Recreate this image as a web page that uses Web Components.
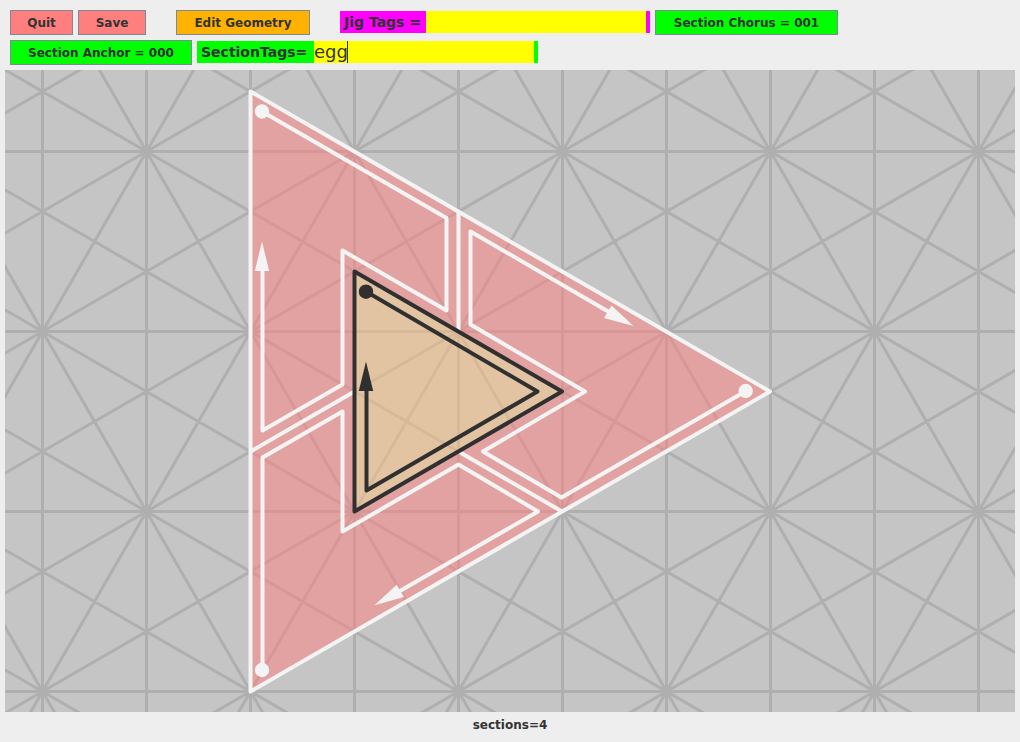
<!DOCTYPE html>
<html lang="en">
<head>
<meta charset="utf-8">
<title>Section editor</title>
<style>
  html, body { height: 100%; }
  body { margin: 0; background: #eeeeee; color: #333333; font: bold 12px/15px "DejaVu Sans", sans-serif; }
</style>
</head>
<body>
<jig-editor></jig-editor>

<template id="tool-button">
  <style>
    :host { display: block; }
    button { display: block; box-sizing: border-box; height: 25px; min-width: var(--button-width, 0); margin: 0; padding: 1px 15px 0;
      border: 1px solid #7a8a99; border-radius: 0; background: var(--fill, #00ff00);
      color: inherit; font: inherit; white-space: nowrap; text-align: center; }
  </style>
  <button type="button"><slot></slot></button>
</template>

<template id="tag-field">
  <style>
    :host { display: block; }
    .panel { display: flex; align-items: center; height: 22px; padding: 0 4px; background: var(--fill, #00ff00); }
    label { box-sizing: border-box; min-width: var(--label-width, 0); font-size: 14px; line-height: 22px; white-space: nowrap; }
    .box { position: relative; width: 220px; height: 22px; }
    input { display: block; box-sizing: border-box; width: 100%; height: 22px; margin: 0; padding: 0; border: 0; border-radius: 0;
      outline: 0; background: #ffff00; color: inherit; font: 18px/22px "DejaVu Sans", sans-serif; }
    .caret { display: none; position: absolute; left: 33px; top: 0; width: 1px; height: 22px; background: #333333; }
    :host([editing]) .caret { display: block; }
  </style>
  <div class="panel">
    <label for="tags"><slot></slot></label>
    <div class="box"><input id="tags" type="text" spellcheck="false" autocomplete="off"><span class="caret"></span></div>
  </div>
</template>

<template id="tiling-canvas">
  <style>
    :host { display: block; min-height: 0; background: #c5c5c5; overflow: hidden; }
    svg { display: block; width: 100%; height: 100%; }
    .grid { fill: none; stroke: #afafaf; stroke-width: 3; }
    .line { fill: none; stroke-width: 4; stroke-linejoin: round; stroke-linecap: butt; }
    .light { stroke: #f4f4f4; }
    .dark { stroke: #303030; }
    .light-fill { fill: #f4f4f4; }
    .dark-fill { fill: #303030; }
  </style>
  <svg viewBox="5 70 1010 642" preserveAspectRatio="xMidYMid slice" role="img" aria-label="Triangle tiling with four sections">
    <path class="grid"/>
    <path fill="#ff7f7f" fill-opacity=".5" d="M250.5 91.5L770 391.5L250.5 691.5ZM354.5 271.5V511.5L562 391.5Z"/>
    <path fill="#ffc47f" fill-opacity=".5" d="M354.5 271.5L562 391.5L354.5 511.5Z"/>
    <g class="line light">
      <path d="M250.5 91.5L770 391.5L250.5 691.5Z"/>
      <path d="M458.5 211.5V331.5M354.5 391.5L250.5 451.5M458.5 451.5L562 511.5"/>
      <path d="M262 111.5L446.5 218V310.5L342.5 250.5V384.5L262.5 430.5V270"/>
      <path d="M746 391L561.5 497.5L483 451.5L585 391.5L470.5 324.5V231.5L609 312"/>
      <path d="M262.5 670V457.5L342.5 411.5V531.5L458.5 464.5L538 511.5L399 591.5"/>
    </g>
    <g class="light-fill">
      <circle cx="262" cy="111.5" r="7.2"/><circle cx="745.7" cy="391" r="7.2"/><circle cx="262" cy="670" r="7.2"/>
      <path d="M262 241.5L269.2 271H254.8Z"/>
      <path d="M633.5 326L611.5 305.5L604 318Z"/>
      <path d="M374.5 605.3L396.7 584.8L404 597Z"/>
    </g>
    <g class="line dark">
      <path d="M354.5 271.5L562 391.5L354.5 511.5Z"/>
      <path d="M366 291.5L537.5 391.5L366.5 490.5V390"/>
    </g>
    <g class="dark-fill">
      <circle cx="366" cy="291.7" r="7.2"/>
      <path d="M366 361.5L373.2 391H358.8Z"/>
    </g>
  </svg>
</template>

<template id="jig-editor">
  <style>
    :host { display: flex; flex-direction: column; height: 100%; min-height: 300px; }
    .tools { display: flex; flex-wrap: wrap; gap: 5px; padding: 10px 10px 5px; align-items: center; }
    .danger { --fill: #ff7f7f; --button-width: 63px; }
    .save { --button-width: 68px; }
    .edit { --fill: #ffb200; --button-width: 134px; margin: 0 25px; }
    .jig { --fill: #ff00ff; --label-width: 82px; }
    .chorus { --button-width: 183px; }
    .anchor { --button-width: 182px; }
    .section { --label-width: 113px; }
    .tools tag-field { padding-bottom: 1px; }
    tiling-canvas { flex: 1; margin: 0 5px; }
    footer { padding: 6px 0 9px; text-align: center; line-height: 15px; }
  </style>
  <header class="tools">
    <tool-button class="danger">Quit</tool-button>
    <tool-button class="danger save">Save</tool-button>
    <tool-button class="edit">Edit Geometry</tool-button>
    <tag-field class="jig">Jig Tags =</tag-field>
    <tool-button class="chorus">Section Chorus = 001</tool-button>
    <tool-button class="anchor">Section Anchor = 000</tool-button>
    <tag-field class="section" value="egg" editing>SectionTags=</tag-field>
  </header>
  <tiling-canvas></tiling-canvas>
  <footer>sections=4</footer>
</template>

<script>
  class TemplateElement extends HTMLElement {
    constructor() {
      super();
      const template = document.getElementById(this.localName);
      this.attachShadow({ mode: "open" }).append(template.content.cloneNode(true));
    }
  }

  class ToolButton extends TemplateElement {}

  class TagField extends TemplateElement {
    connectedCallback() {
      this.shadowRoot.querySelector("input").value = this.getAttribute("value") || "";
    }
  }

  // Hubs form a triangular lattice; twelve rays leave each hub at 30 degree steps.
  class TilingCanvas extends TemplateElement {
    connectedCallback() {
      const column = 104, row = 180, x0 = 42.5, y0 = 331.5;
      const left = x0 - 10 * column, right = x0 + 20 * column;
      const top = y0 - 8 * row, bottom = y0 + 8 * row;
      let d = "";
      for (let k = -10; k <= 20; k++) d += `M${x0 + k * column} ${top}V${bottom}`;
      for (let k = -8; k <= 8; k++) d += `M${left} ${y0 + k * row}H${right}`;
      for (let k = -20; k <= 20; k++) {
        const y = y0 + k * 120;
        d += `M${left} ${y - 600}L${right} ${y + 1200}M${left} ${y + 600}L${right} ${y - 1200}`;
        const x = x0 + k * 2 * column;
        d += `M${x - 8 * column} ${top}L${x + 8 * column} ${bottom}M${x + 8 * column} ${top}L${x - 8 * column} ${bottom}`;
      }
      this.shadowRoot.querySelector(".grid").setAttribute("d", d);
    }
  }

  class JigEditor extends TemplateElement {}

  customElements.define("tool-button", ToolButton);
  customElements.define("tag-field", TagField);
  customElements.define("tiling-canvas", TilingCanvas);
  customElements.define("jig-editor", JigEditor);
</script>
</body>
</html>
